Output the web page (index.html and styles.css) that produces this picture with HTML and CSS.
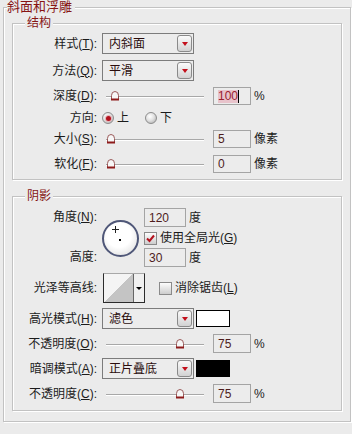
FILE: index.html
```html
<!DOCTYPE html>
<html lang="zh-CN">
<head>
<meta charset="utf-8">
<title>斜面和浮雕</title>
<link rel="stylesheet" href="styles.css">
</head>
<body>
<fieldset class="group outer">
  <legend class="title title-main">斜面和浮雕</legend>

  <fieldset class="group sub sub-structure">
    <legend class="title">结构</legend>

    <div class="row row-first">
      <span class="label">样式(<u>T</u>):</span>
      <div class="select"><span class="select-text">内斜面</span><span class="select-btn"><i class="arrow"></i></span></div>
    </div>

    <div class="row">
      <span class="label">方法(<u>Q</u>):</span>
      <div class="select"><span class="select-text">平滑</span><span class="select-btn"><i class="arrow"></i></span></div>
    </div>

    <div class="row">
      <span class="label">深度(<u>D</u>):</span>
      <div class="slider">
        <div class="track"></div>
        <svg class="thumb" style="left:4%" width="10" height="11" viewBox="0 0 10 11"><path d="M1.5 9.5V5.5Q1.5 1.5 5 1.5Q8.5 1.5 8.5 5.5V9.5Z" fill="#f7f7f7" stroke="#9a5a5a"/><rect x="1" y="8.5" width="8" height="2" fill="#8e1b1b"/></svg>
      </div>
      <div class="num"><span class="sel">100</span><span class="caret"></span></div>
      <span class="unit">%</span>
    </div>

    <div class="row row-dir">
      <span class="label">方向:</span>
      <span class="radio on"></span><span class="radio-text">上</span>
      <span class="radio radio-2"></span><span class="radio-text">下</span>
    </div>

    <div class="row row-5">
      <span class="label">大小(<u>S</u>):</span>
      <div class="slider">
        <div class="track"></div>
        <svg class="thumb" style="left:0%" width="10" height="11" viewBox="0 0 10 11"><path d="M1.5 9.5V5.5Q1.5 1.5 5 1.5Q8.5 1.5 8.5 5.5V9.5Z" fill="#f7f7f7" stroke="#9a5a5a"/><rect x="1" y="8.5" width="8" height="2" fill="#8e1b1b"/></svg>
      </div>
      <div class="num">5</div>
      <span class="unit">像素</span>
    </div>

    <div class="row row-7">
      <span class="label">软化(<u>F</u>):</span>
      <div class="slider">
        <div class="track"></div>
        <svg class="thumb" style="left:0%" width="10" height="11" viewBox="0 0 10 11"><path d="M1.5 9.5V5.5Q1.5 1.5 5 1.5Q8.5 1.5 8.5 5.5V9.5Z" fill="#f7f7f7" stroke="#9a5a5a"/><rect x="1" y="8.5" width="8" height="2" fill="#8e1b1b"/></svg>
      </div>
      <div class="num">0</div>
      <span class="unit">像素</span>
    </div>
  </fieldset>

  <fieldset class="group sub sub-shadow">
    <legend class="title">阴影</legend>

    <div class="angle">
      <div class="angle-labels">
        <span class="angle-label">角度(<u>N</u>):</span>
        <span class="angle-label">高度:</span>
      </div>
      <div class="dial">
        <svg width="33" height="33" viewBox="0 0 33 33"><path d="M11.5 4v7M8 7.5h7" stroke="#222" stroke-width="1"/><rect x="15" y="17" width="2" height="2" fill="#000"/></svg>
      </div>
      <div class="angle-controls">
        <div class="num-line"><div class="num wide">120</div><span class="unit">度</span></div>
        <div class="check-row">
          <span class="check"><svg width="11" height="11" viewBox="0 0 11 11"><path d="M2 5.5L4.5 8L9 2.5" fill="none" stroke="#b3121e" stroke-width="2"/></svg></span>
          <span>使用全局光(<u>G</u>)</span>
        </div>
        <div class="num-line"><div class="num wide">30</div><span class="unit">度</span></div>
      </div>
    </div>

    <div class="row row-contour">
      <span class="label">光泽等高线:</span>
      <div class="contour">
        <div class="contour-img"></div>
        <div class="contour-arrow"><i class="mini-arrow"></i></div>
      </div>
      <span class="check check-aa"></span>
      <span>消除锯齿(<u>L</u>)</span>
    </div>

    <div class="row row-5">
      <span class="label">高光模式(<u>H</u>):</span>
      <div class="select"><span class="select-text">滤色</span><span class="select-btn"><i class="arrow"></i></span></div>
      <span class="swatch swatch-white"></span>
    </div>

    <div class="row row-5">
      <span class="label">不透明度(<u>O</u>):</span>
      <div class="slider">
        <div class="track"></div>
        <svg class="thumb" style="left:70%" width="10" height="11" viewBox="0 0 10 11"><path d="M1.5 9.5V5.5Q1.5 1.5 5 1.5Q8.5 1.5 8.5 5.5V9.5Z" fill="#f7f7f7" stroke="#9a5a5a"/><rect x="1" y="8.5" width="8" height="2" fill="#8e1b1b"/></svg>
      </div>
      <div class="num tall">75</div>
      <span class="unit">%</span>
    </div>

    <div class="row row-5">
      <span class="label">暗调模式(<u>A</u>):</span>
      <div class="select"><span class="select-text">正片叠底</span><span class="select-btn"><i class="arrow"></i></span></div>
      <span class="swatch swatch-black"></span>
    </div>

    <div class="row row-5">
      <span class="label">不透明度(<u>C</u>):</span>
      <div class="slider">
        <div class="track"></div>
        <svg class="thumb" style="left:70%" width="10" height="11" viewBox="0 0 10 11"><path d="M1.5 9.5V5.5Q1.5 1.5 5 1.5Q8.5 1.5 8.5 5.5V9.5Z" fill="#f7f7f7" stroke="#9a5a5a"/><rect x="1" y="8.5" width="8" height="2" fill="#8e1b1b"/></svg>
      </div>
      <div class="num tall">75</div>
      <span class="unit">%</span>
    </div>
  </fieldset>
</fieldset>
</body>
</html>
```
FILE: styles.css
```css
* { box-sizing: border-box; }
html, body { margin: 0; padding: 0; }
body {
  width: 352px;
  height: 434px;
  overflow: hidden;
  background: #ebebeb;
  font-family: "Liberation Sans", "Noto Sans CJK SC", sans-serif;
  font-size: 12px;
  line-height: 14px;
  color: #1b1b1b;
}
u { text-decoration: underline; text-underline-offset: 1px; }

.group {
  margin: 0;
  border: 1px solid #c2c2c2;
  box-shadow: inset 1px 1px 0 #fff, 1px 1px 0 #fff;
  min-width: 0;
}
.outer {
  width: 348px;
  margin: 0 0 0 3px;
  padding: 2px 8px 10px 8px;
}
.title {
  color: #861414;
  background: #ebebeb;
  line-height: 14px;
  padding: 0 2px;
  margin-left: 12px;
}
.title-main {
  font-size: 13px;
  margin-left: -5px;
  padding: 0 3px 0 0;
}
.sub { width: 100%; }
.sub-structure { padding: 3px 0 6px 0; }
.sub-shadow { margin-top: 9px; padding: 5px 0 7px 0; }

.row { display: flex; align-items: center; margin-top: 6px; }
.row-first { margin-top: 0; }
.row-5 { margin-top: 5px; }
.row-7 { margin-top: 7px; }

.label {
  flex: none;
  width: 84px;
  margin-right: 5px;
  text-align: right;
  white-space: nowrap;
}

.select {
  flex: none;
  width: 92px;
  height: 21px;
  border: 1px solid #7c7c7c;
  background: #ececec;
  color: #2a0c0c;
  display: flex;
  align-items: center;
  justify-content: space-between;
  padding: 0 1px 0 6px;
}
.select-btn {
  width: 15px;
  height: 17px;
  border: 1px solid #8a8a8a;
  border-radius: 3px;
  background: linear-gradient(#fbfbfb, #d2d2d2);
  display: flex;
  align-items: center;
  justify-content: center;
}
.arrow {
  width: 0;
  height: 0;
  border-left: 3px solid transparent;
  border-right: 3px solid transparent;
  border-top: 4px solid #c3101c;
}

.slider {
  position: relative;
  flex: none;
  width: 98px;
  height: 18px;
  margin: 0 9px 0 4px;
  display: flex;
  align-items: center;
}
.track {
  flex: 1;
  height: 2px;
  margin-top: 2px;
  border-top: 1px solid #a8a8a8;
  border-bottom: 1px solid #fff;
}
.thumb { position: absolute; top: 3px; }

.num {
  flex: none;
  width: 38px;
  height: 18px;
  border: 1px solid #a4a4a4;
  background: #ececec;
  color: #4e1c1c;
  padding: 0 0 0 4px;
  display: flex;
  align-items: center;
}
.num.tall { height: 19px; }
.num.wide { width: 42px; height: 19px; }
.sel { background: #e8c3cb; color: #9b2030; line-height: 13px; }
.caret { width: 1px; height: 13px; background: #000; }
.unit { margin-left: 3px; }

.radio {
  flex: none;
  width: 12px;
  height: 12px;
  border-radius: 50%;
  border: 1px solid #8d8d8d;
  background: radial-gradient(circle at 40% 35%, #ffffff 0%, #e2e2e2 45%, #a6a6a6 100%);
  display: flex;
  align-items: center;
  justify-content: center;
}
.radio.on::after {
  content: "";
  width: 5px;
  height: 5px;
  border-radius: 50%;
  background: #b3121e;
  box-shadow: 0 0 0 1px #e6b4b8;
}
.radio-2 { margin-left: 16px; }
.radio-text { margin-left: 3px; }

.angle { display: flex; }
.angle-labels {
  flex: none;
  width: 84px;
  margin-right: 5px;
  display: flex;
  flex-direction: column;
  justify-content: space-between;
  text-align: right;
}
.angle-label { line-height: 19px; }
.dial {
  flex: none;
  width: 37px;
  height: 37px;
  margin-top: 12px;
  border: 2px solid #4f5778;
  border-radius: 50%;
  background: radial-gradient(circle at 45% 40%, #ffffff 45%, #d6d6d6 100%);
}
.dial svg { display: block; }
.angle-controls {
  margin-left: 5px;
  display: flex;
  flex-direction: column;
}
.num-line { display: flex; align-items: center; }
.check-row {
  display: flex;
  align-items: center;
  height: 14px;
  margin: 4px 0 3px;
}
.check {
  flex: none;
  width: 13px;
  height: 13px;
  border: 1px solid #8a8a8a;
  background: linear-gradient(#fdfdfd, #cdcdcd);
  margin-right: 3px;
  display: flex;
  align-items: center;
  justify-content: center;
}
.check svg { display: block; }
.check-aa { margin-left: 14px; }

.contour {
  flex: none;
  display: flex;
  height: 30px;
  margin-left: 1px;
  border: 1px solid #2c2c2c;
  border-top-color: #a8a8a8;
}
.contour-img {
  width: 30px;
  background: linear-gradient(to top left, #c4c4c4 50%, #f4f4f4 50%);
  border-right: 1px solid #666;
}
.contour-arrow {
  width: 10px;
  background: #f0f0f0;
  display: flex;
  align-items: center;
  justify-content: center;
}
.mini-arrow {
  width: 0;
  height: 0;
  border-left: 3px solid transparent;
  border-right: 3px solid transparent;
  border-top: 3px solid #000;
}

.swatch {
  flex: none;
  width: 34px;
  height: 17px;
  margin-left: 2px;
  border: 1px solid #000;
}
.swatch-white { background: #fff; }
.swatch-black { background: #000; }
```
